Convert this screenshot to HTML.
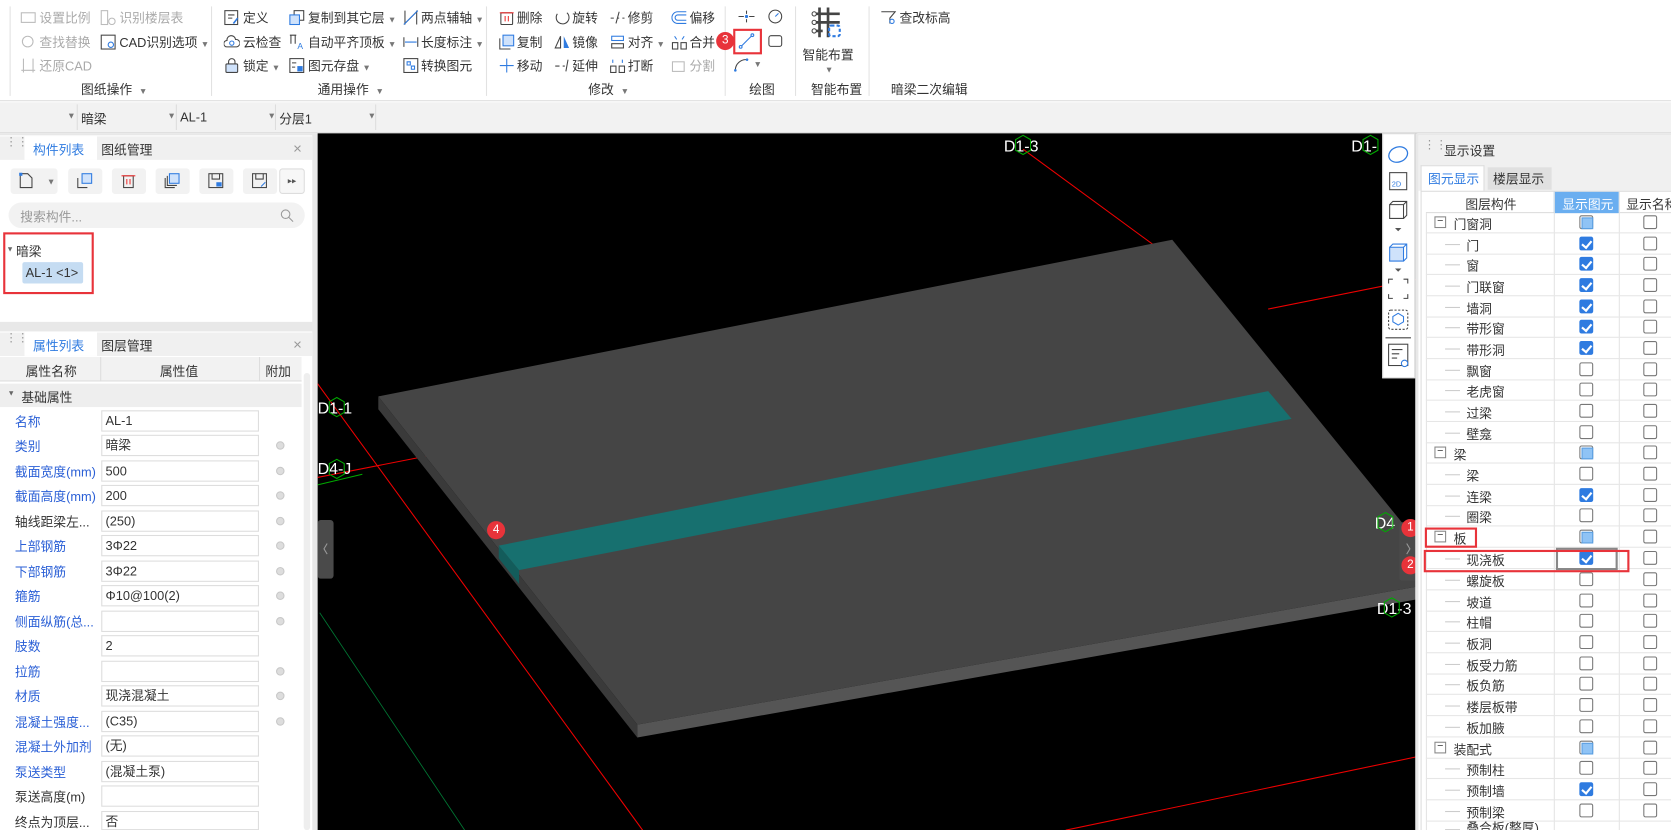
<!DOCTYPE html>
<html><head><meta charset="utf-8">
<style>
*{box-sizing:border-box;margin:0;padding:0}
html,body{width:1671px;height:830px;overflow:hidden;background:#fff}
#w{position:absolute;left:0;top:0;width:1568px;height:779px;overflow:hidden;transform:scale(1.06569);transform-origin:0 0;font-family:"Liberation Sans","Noto Sans CJK SC",sans-serif;font-size:12px;color:#333;background:#fff}
.a{position:absolute;white-space:nowrap}
.ic{position:absolute;width:15px;height:15px}
.gl{position:absolute;top:75px;font-size:12px;color:#333}
.sep{position:absolute;top:6px;width:1px;height:84px;background:#e2e2e2}
.dis{color:#aaa}
.dd{font-size:8px;color:#777;margin-left:3px}
.cb{position:absolute;width:13px;height:13px;border:1px solid #777;border-radius:2px;background:#fff}
.cb.c{background:#2f7be0;border-color:#2f7be0}
.cb.c:after{content:"";position:absolute;left:3px;top:1px;width:4px;height:7px;border:solid #fff;border-width:0 2px 2px 0;transform:rotate(40deg)}
.cb.g:after{content:"";position:absolute;left:1px;top:1px;width:9px;height:9px;background:#8fc3f5;border:1px solid #5a9ee0}
.badge{position:absolute;width:17px;height:17px;border-radius:50%;background:#e8333a;color:#fff;font-size:11px;text-align:center;line-height:17px}
.inp{position:absolute;left:95px;width:148px;height:20px;border:1px solid #ddd;background:#fff;padding-left:3px;line-height:18px}
.dot{position:absolute;left:259px;width:8px;height:8px;border-radius:50%;background:#ddd;border:1px solid #c8c8c8}
.lbl{position:absolute;left:14px}
.blue{color:#2a5fd6}
.rt{position:absolute;left:1338px;width:230px;height:20px;border-bottom:1px solid #e6e6e6;overflow:hidden}
</style></head><body><div id="w">

<!-- ribbon -->
<div class="a" style="left:0;top:0;width:1568px;height:95px;background:#fff;border-bottom:1px solid #ddd"></div>
<div class="sep" style="left:9px"></div>
<div class="sep" style="left:198px"></div>
<div class="sep" style="left:456px"></div>
<div class="sep" style="left:680px"></div>
<div class="sep" style="left:746px"></div>
<div class="sep" style="left:815px"></div>

<svg class="ic" style="left:19px;top:9px" viewBox="0 0 15 15"><rect x="1" y="3" width="13" height="9" fill="none" stroke="#bbb"/></svg>
<div class="a dis" style="left:37px;top:8px">设置比例</div>
<svg class="ic" style="left:94px;top:9px" viewBox="0 0 15 15"><rect x="1" y="1" width="6" height="13" fill="none" stroke="#bbb"/><circle cx="11" cy="11" r="3" fill="none" stroke="#bbb"/></svg>
<div class="a dis" style="left:112px;top:8px">识别楼层表</div>
<svg class="ic" style="left:19px;top:32px" viewBox="0 0 15 15"><circle cx="7" cy="7" r="5" fill="none" stroke="#bbb"/></svg>
<div class="a dis" style="left:37px;top:31px">查找替换</div>
<svg class="ic" style="left:94px;top:32px" viewBox="0 0 15 15"><rect x="1" y="1" width="13" height="13" fill="none" stroke="#444"/><circle cx="10" cy="10" r="2.5" fill="none" stroke="#2f7be0"/></svg>
<div class="a" style="left:112px;top:31px">CAD识别选项<span class="dd">▼</span></div>
<svg class="ic" style="left:19px;top:54px" viewBox="0 0 15 15"><path d="M3 1v13M1 12h13M12 1v13" fill="none" stroke="#bbb"/></svg>
<div class="a dis" style="left:37px;top:53px">还原CAD</div>
<div class="gl" style="left:76px">图纸操作 <span class="dd">▼</span></div>

<svg class="ic" style="left:210px;top:9px" viewBox="0 0 15 15"><rect x="1" y="1" width="12" height="13" fill="none" stroke="#444"/><path d="M4 5h6M4 8h4" stroke="#444"/><path d="M9 13l4-5" stroke="#2f7be0" stroke-width="1.5"/></svg>
<div class="a" style="left:228px;top:8px">定义</div>
<svg class="ic" style="left:210px;top:32px" viewBox="0 0 15 15"><path d="M3 12a3 3 0 010-6 4 4 0 018-1 3 3 0 011 7z" fill="none" stroke="#444"/><circle cx="7.5" cy="8.5" r="2" fill="none" stroke="#2f7be0"/></svg>
<div class="a" style="left:228px;top:31px">云检查</div>
<svg class="ic" style="left:210px;top:54px" viewBox="0 0 15 15"><rect x="2" y="6" width="11" height="8" rx="1" fill="#cfe2fb" stroke="#444"/><path d="M4.5 6V4a3 3 0 016 0v2" fill="none" stroke="#444"/></svg>
<div class="a" style="left:228px;top:53px">锁定<span class="dd">▼</span></div>
<svg class="ic" style="left:271px;top:9px" viewBox="0 0 15 15"><rect x="5" y="1" width="9" height="9" fill="none" stroke="#444"/><rect x="1" y="5" width="9" height="9" fill="#cfe2fb" stroke="#2f7be0"/></svg>
<div class="a" style="left:289px;top:8px">复制到其它层<span class="dd">▼</span></div>
<svg class="ic" style="left:271px;top:32px" viewBox="0 0 15 15"><path d="M2 1v8M6 1v8M1 1h6" fill="none" stroke="#444"/><text x="8" y="14" font-size="8" fill="#2f7be0">A</text></svg>
<div class="a" style="left:289px;top:31px">自动平齐顶板<span class="dd">▼</span></div>
<svg class="ic" style="left:271px;top:54px" viewBox="0 0 15 15"><rect x="1" y="1" width="13" height="13" fill="none" stroke="#444"/><path d="M3 5h4M3 9h3" stroke="#444"/><rect x="8" y="8" width="5" height="5" fill="#2f7be0"/></svg>
<div class="a" style="left:289px;top:53px">图元存盘<span class="dd">▼</span></div>
<svg class="ic" style="left:378px;top:9px" viewBox="0 0 15 15"><path d="M2 1v13M13 1v13M1 14L14 1" fill="none" stroke="#444"/><path d="M1 14L14 1" stroke="#2f7be0"/></svg>
<div class="a" style="left:395px;top:8px">两点辅轴<span class="dd">▼</span></div>
<svg class="ic" style="left:378px;top:32px" viewBox="0 0 15 15"><path d="M1 3v9M14 3v9" stroke="#444"/><path d="M2 7.5h11" stroke="#2f7be0"/></svg>
<div class="a" style="left:395px;top:31px">长度标注<span class="dd">▼</span></div>
<svg class="ic" style="left:378px;top:54px" viewBox="0 0 15 15"><rect x="1" y="1" width="13" height="13" fill="none" stroke="#444"/><path d="M4 4h3v3H4zM8 8h3v3H8z" fill="none" stroke="#2f7be0"/></svg>
<div class="a" style="left:395px;top:53px">转换图元</div>
<div class="gl" style="left:298px">通用操作 <span class="dd">▼</span></div>

<svg class="ic" style="left:468px;top:9px" viewBox="0 0 15 15"><rect x="2" y="3" width="11" height="11" rx="1" fill="none" stroke="#444"/><path d="M1 3h13M6 6v5M9 6v5" stroke="#e33"/></svg>
<div class="a" style="left:485px;top:8px">删除</div>
<svg class="ic" style="left:468px;top:32px" viewBox="0 0 15 15"><rect x="4" y="1" width="10" height="10" fill="#cfe2fb" stroke="#2f7be0"/><path d="M1 4v10h10" fill="none" stroke="#444"/></svg>
<div class="a" style="left:485px;top:31px">复制</div>
<svg class="ic" style="left:468px;top:54px" viewBox="0 0 15 15"><path d="M7.5 1v13M1 7.5h13" stroke="#2f7be0"/></svg>
<div class="a" style="left:485px;top:53px">移动</div>
<svg class="ic" style="left:520px;top:9px" viewBox="0 0 15 15"><path d="M3 4a6 6 0 109-1" fill="none" stroke="#444"/></svg>
<div class="a" style="left:537px;top:8px">旋转</div>
<svg class="ic" style="left:520px;top:32px" viewBox="0 0 15 15"><path d="M6 2L1 13h5z" fill="none" stroke="#444"/><path d="M9 2l5 11H9z" fill="#2f7be0"/></svg>
<div class="a" style="left:537px;top:31px">镜像</div>
<svg class="ic" style="left:520px;top:54px" viewBox="0 0 15 15"><path d="M1 8h4M8 8h2M13 2L11 13" stroke="#444"/></svg>
<div class="a" style="left:537px;top:53px">延伸</div>
<svg class="ic" style="left:572px;top:9px" viewBox="0 0 15 15"><path d="M1 8h3M7 8h2M12 8h2M9 2L6 13" stroke="#444"/></svg>
<div class="a" style="left:589px;top:8px">修剪</div>
<svg class="ic" style="left:572px;top:32px" viewBox="0 0 15 15"><rect x="2" y="2" width="11" height="4" fill="none" stroke="#2f7be0"/><rect x="2" y="9" width="11" height="4" fill="none" stroke="#444"/></svg>
<div class="a" style="left:589px;top:31px">对齐<span class="dd">▼</span></div>
<svg class="ic" style="left:572px;top:54px" viewBox="0 0 15 15"><rect x="1" y="8" width="5" height="6" fill="none" stroke="#444"/><rect x="9" y="8" width="5" height="6" fill="none" stroke="#444"/><path d="M3 5V2M12 5V2" stroke="#2f7be0"/></svg>
<div class="a" style="left:589px;top:53px">打断</div>
<svg class="ic" style="left:630px;top:9px" viewBox="0 0 15 15"><path d="M14 2H6a5 5 0 000 11h8M14 5H6a2.5 2.5 0 000 5h8" fill="none" stroke="#2f7be0"/></svg>
<div class="a" style="left:647px;top:8px">偏移</div>
<svg class="ic" style="left:630px;top:32px" viewBox="0 0 15 15"><rect x="1" y="8" width="5" height="6" fill="none" stroke="#444"/><rect x="9" y="8" width="5" height="6" fill="none" stroke="#444"/><path d="M3 2l2 3M12 2l-2 3" stroke="#2f7be0"/></svg>
<div class="a" style="left:647px;top:31px">合并</div>
<svg class="ic" style="left:630px;top:54px" viewBox="0 0 15 15"><rect x="1" y="4" width="11" height="9" fill="none" stroke="#bbb"/></svg>
<div class="a dis" style="left:647px;top:53px">分割</div>
<div class="gl" style="left:552px">修改 <span class="dd">▼</span></div>

<svg class="ic" style="left:693px;top:8px" viewBox="0 0 15 15"><path d="M0 7.5h5M10 7.5h5M7.5 2v3M7.5 10v3" stroke="#444"/><circle cx="7.5" cy="7.5" r="1.5" fill="#2f7be0"/></svg>
<svg class="ic" style="left:720px;top:8px" viewBox="0 0 15 15"><circle cx="7.5" cy="7.5" r="6" fill="none" stroke="#444"/><path d="M7.5 7.5l3-3" stroke="#2f7be0"/></svg>
<svg class="ic" style="left:693px;top:31px" viewBox="0 0 15 15"><path d="M2 13L13 2" stroke="#2f7be0"/><circle cx="2" cy="13" r="1.3" fill="#fff" stroke="#2f7be0"/><circle cx="13" cy="2" r="1.3" fill="#fff" stroke="#2f7be0"/></svg>
<div class="a" style="left:688px;top:27px;width:27px;height:24px;border:2px solid #e8333a"></div>
<svg class="ic" style="left:720px;top:31px" viewBox="0 0 15 15"><rect x="1.5" y="2.5" width="12" height="10" rx="2" fill="none" stroke="#444"/></svg>
<svg class="ic" style="left:688px;top:53px" viewBox="0 0 15 15"><path d="M2 13A10 10 0 0113 3" fill="none" stroke="#444"/><circle cx="2" cy="13" r="1.2" fill="#2f7be0"/><circle cx="13" cy="3" r="1.2" fill="#2f7be0"/></svg>
<div class="a dd" style="left:704px;top:56px">▼</div>
<div class="badge" style="left:672px;top:30px">3</div>
<div class="gl" style="left:703px">绘图</div>

<svg class="a" style="left:760px;top:6px" width="30" height="30" viewBox="0 0 30 30"><path d="M9 1v28M17 1v28M4 7h24M4 15h24M4 23h8" stroke="#444" stroke-width="2.5"/><circle cx="4" cy="7" r="2" fill="#fff" stroke="#444"/><circle cx="4" cy="15" r="2" fill="#fff" stroke="#444"/><circle cx="4" cy="23" r="2" fill="#fff" stroke="#444"/><rect x="18" y="18" width="10" height="10" rx="2" fill="none" stroke="#2f7be0" stroke-width="2" stroke-dasharray="3 2"/></svg>
<div class="a" style="left:753px;top:43px">智能布置</div>
<div class="a dd" style="left:771px;top:61px">▼</div>
<div class="gl" style="left:761px">智能布置</div>

<svg class="ic" style="left:826px;top:9px" viewBox="0 0 15 15"><path d="M1 2h13L9 8v5" fill="none" stroke="#444"/><circle cx="11" cy="11" r="2" fill="none" stroke="#2f7be0"/></svg>
<div class="a" style="left:844px;top:8px">查改标高</div>
<div class="gl" style="left:836px">暗梁二次编辑</div>

<!-- second toolbar -->
<div class="a" style="left:0;top:96px;width:1568px;height:29px;background:#f2f2f2;border-bottom:1px solid #ddd"></div>
<div class="a" style="left:72px;top:98px;width:1px;height:24px;background:#ddd"></div>
<div class="a" style="left:165px;top:98px;width:1px;height:24px;background:#ddd"></div>
<div class="a" style="left:258px;top:98px;width:1px;height:24px;background:#ddd"></div>
<div class="a" style="left:352px;top:98px;width:1px;height:24px;background:#ddd"></div>
<div class="a dd" style="left:60px;top:104px">▼</div>
<div class="a" style="left:76px;top:103px">暗梁</div><div class="a dd" style="left:154px;top:104px">▼</div>
<div class="a" style="left:169px;top:103px">AL-1</div><div class="a dd" style="left:248px;top:104px">▼</div>
<div class="a" style="left:262px;top:103px">分层1</div><div class="a dd" style="left:342px;top:104px">▼</div>

<!-- left panel -->
<div class="a" style="left:0;top:125px;width:298px;height:654px;background:#e8e8e8"></div>
<div class="a" style="left:0;top:127px;width:293px;height:175px;background:#fff"></div>
<div class="a" style="left:0;top:128px;width:293px;height:22px;background:#f0f0f0"></div>
<div class="a" style="left:5px;top:131px;color:#999;font-size:11px;line-height:5px">⋮⋮</div>
<div class="a" style="left:23px;top:128px;width:68px;height:22px;background:#fff"></div>
<div class="a" style="left:31px;top:132px;color:#2f7be0">构件列表</div>
<div class="a" style="left:95px;top:132px">图纸管理</div>
<div class="a" style="left:275px;top:131px;color:#999;font-size:14px">×</div>
<div class="a" style="left:10px;top:158px;width:44px;height:24px;background:#f2f2f2;border-radius:3px"></div>
<div class="a" style="left:64px;top:158px;width:32px;height:24px;background:#f2f2f2;border-radius:3px"></div>
<div class="a" style="left:105px;top:158px;width:32px;height:24px;background:#f2f2f2;border-radius:3px"></div>
<div class="a" style="left:146px;top:158px;width:32px;height:24px;background:#f2f2f2;border-radius:3px"></div>
<div class="a" style="left:187px;top:158px;width:32px;height:24px;background:#f2f2f2;border-radius:3px"></div>
<div class="a" style="left:228px;top:158px;width:32px;height:24px;background:#f2f2f2;border-radius:3px"></div>
<div class="a" style="left:262px;top:158px;width:24px;height:24px;background:#f7f7f7;border:1px solid #ddd;border-radius:3px;font-size:8px;text-align:center;line-height:22px;color:#555">▸▸</div>
<svg class="ic" style="left:17px;top:162px" viewBox="0 0 15 15"><path d="M2 1h7l4 4v9H2z" fill="none" stroke="#444"/><rect x="1" y="0" width="3" height="3" fill="#2f7be0"/></svg>
<div class="a dd" style="left:41px;top:166px">▼</div>
<svg class="ic" style="left:72px;top:162px" viewBox="0 0 15 15"><rect x="5" y="1" width="9" height="9" fill="#cfe2fb" stroke="#2f7be0"/><path d="M1 5v9h9" fill="none" stroke="#444"/></svg>
<svg class="ic" style="left:113px;top:162px" viewBox="0 0 15 15"><rect x="3" y="3" width="9" height="11" fill="none" stroke="#444"/><path d="M1 3h13M6 6v5M9 6v5" stroke="#e33"/></svg>
<svg class="ic" style="left:154px;top:162px" viewBox="0 0 15 15"><rect x="5" y="1" width="9" height="9" fill="#cfe2fb" stroke="#2f7be0"/><path d="M3 3v9h9M1 5v9h9" fill="none" stroke="#444"/></svg>
<svg class="ic" style="left:195px;top:162px" viewBox="0 0 15 15"><rect x="1" y="1" width="13" height="13" fill="none" stroke="#444"/><path d="M4 1v5h7V1" fill="none" stroke="#444"/><rect x="8" y="9" width="5" height="4" fill="#2f7be0"/></svg>
<svg class="ic" style="left:236px;top:162px" viewBox="0 0 15 15"><rect x="1" y="1" width="13" height="13" fill="none" stroke="#444"/><path d="M4 1v5h7V1" fill="none" stroke="#444"/><path d="M9 13l4-4" stroke="#2f7be0"/></svg>
<div class="a" style="left:8px;top:190px;width:278px;height:24px;background:#f2f2f2;border-radius:12px"></div>
<div class="a" style="left:19px;top:195px;color:#999">搜索构件...</div>
<svg class="ic" style="left:262px;top:195px" viewBox="0 0 15 15"><circle cx="6" cy="6" r="4" fill="none" stroke="#999"/><path d="M9 9l4 4" stroke="#999"/></svg>
<div class="a" style="left:3px;top:218px;width:85px;height:58px;border:2px solid #e8333a"></div>
<div class="a" style="left:6px;top:231px;font-size:7px;color:#666">▼</div>
<div class="a" style="left:15px;top:227px">暗梁</div>
<div class="a" style="left:21px;top:246px;width:57px;height:20px;background:#c5dcf2;border-radius:2px;padding-left:3px;line-height:20px">AL-1 &lt;1&gt;</div>

<div class="a" style="left:0;top:311px;width:293px;height:468px;background:#fff"></div>
<div class="a" style="left:0;top:312px;width:293px;height:22px;background:#f0f0f0"></div>
<div class="a" style="left:5px;top:315px;color:#999;font-size:11px;line-height:5px">⋮⋮</div>
<div class="a" style="left:23px;top:312px;width:68px;height:22px;background:#fff"></div>
<div class="a" style="left:31px;top:316px;color:#2f7be0">属性列表</div>
<div class="a" style="left:95px;top:316px">图层管理</div>
<div class="a" style="left:275px;top:315px;color:#999;font-size:14px">×</div>
<div class="a" style="left:0;top:335px;width:283px;height:23px;background:#f2f2f2;border-bottom:1px solid #ddd"></div>
<div class="a" style="left:94px;top:335px;width:1px;height:23px;background:#ddd"></div>
<div class="a" style="left:243px;top:335px;width:1px;height:23px;background:#ddd"></div>
<div class="a" style="left:24px;top:340px">属性名称</div>
<div class="a" style="left:150px;top:340px">属性值</div>
<div class="a" style="left:249px;top:340px">附加</div>
<div class="a" style="left:0;top:360px;width:283px;height:22px;background:#eee"></div>
<div class="a" style="left:7px;top:366px;font-size:7px;color:#666">▼</div>
<div class="a" style="left:20px;top:364px">基础属性</div>
<div class="a" style="left:285px;top:350px;width:6px;height:429px;background:#eee;border-radius:3px"></div>

<div class="lbl blue" style="top:387px">名称</div><div class="inp" style="top:385px">AL-1</div>
<div class="lbl blue" style="top:410px">类别</div><div class="inp" style="top:408px">暗梁</div><div class="dot" style="top:414px"></div>
<div class="lbl blue" style="top:434px">截面宽度(mm)</div><div class="inp" style="top:432px">500</div><div class="dot" style="top:438px"></div>
<div class="lbl blue" style="top:457px">截面高度(mm)</div><div class="inp" style="top:455px">200</div><div class="dot" style="top:461px"></div>
<div class="lbl" style="top:481px">轴线距梁左...</div><div class="inp" style="top:479px">(250)</div><div class="dot" style="top:485px"></div>
<div class="lbl blue" style="top:504px">上部钢筋</div><div class="inp" style="top:502px">3Φ22</div><div class="dot" style="top:508px"></div>
<div class="lbl blue" style="top:528px">下部钢筋</div><div class="inp" style="top:526px">3Φ22</div><div class="dot" style="top:532px"></div>
<div class="lbl blue" style="top:551px">箍筋</div><div class="inp" style="top:549px">Φ10@100(2)</div><div class="dot" style="top:555px"></div>
<div class="lbl blue" style="top:575px">侧面纵筋(总...</div><div class="inp" style="top:573px"></div><div class="dot" style="top:579px"></div>
<div class="lbl blue" style="top:598px">肢数</div><div class="inp" style="top:596px">2</div>
<div class="lbl blue" style="top:622px">拉筋</div><div class="inp" style="top:620px"></div><div class="dot" style="top:626px"></div>
<div class="lbl blue" style="top:645px">材质</div><div class="inp" style="top:643px">现浇混凝土</div><div class="dot" style="top:649px"></div>
<div class="lbl blue" style="top:669px">混凝土强度...</div><div class="inp" style="top:667px">(C35)</div><div class="dot" style="top:673px"></div>
<div class="lbl blue" style="top:692px">混凝土外加剂</div><div class="inp" style="top:690px">(无)</div>
<div class="lbl blue" style="top:716px">泵送类型</div><div class="inp" style="top:714px">(混凝土泵)</div>
<div class="lbl" style="top:739px">泵送高度(m)</div><div class="inp" style="top:737px"></div>
<div class="lbl" style="top:763px">终点为顶层...</div><div class="inp" style="top:761px;height:18px">否</div>

<!-- viewport -->
<svg class="a" style="left:298px;top:125px" width="1032" height="654" viewBox="298 125 1032 654">
<rect x="298" y="125" width="1032" height="654" fill="#000"/>
<path d="M298 360L603 779" stroke="#e00" stroke-width="1"/>
<path d="M960 140L1110 250" stroke="#e00"/>
<path d="M298 448L400 428" stroke="#e00"/>
<path d="M1190 290L1330 262" stroke="#e00"/>
<path d="M1000 779L1330 710" stroke="#e00"/>
<path d="M298 455L340 445" stroke="#0a0"/>
<path d="M300 575L436 779" stroke="#073" stroke-width="0.8"/>
<polygon points="355,372 1100,225 1360,545 598,680" fill="#454545"/>
<polygon points="355,372 598,680 598,692 355,384" fill="#3a3a3a"/>
<polygon points="598,680 1360,545 1360,557 598,692" fill="#555"/>
<polygon points="468,512 1190,367 1212,393 487,535" fill="#17706f"/>
<polygon points="468,512 487,535 487,548 468,524" fill="#135c5b"/>
<g font-family="Liberation Sans,sans-serif" font-size="15" fill="#fff">
<text x="942" y="142">D1-3</text>
<text x="1268" y="142">D1-</text>
<text x="298" y="388">D1-1</text>
<text x="298" y="445">D4-J</text>
<text x="1290" y="496">D4</text>
<text x="1292" y="576">D1-3</text>
</g>
<g fill="none" stroke="#0a0" stroke-width="1">
<polygon points="960,127 967,131 967,141 960,145 953,141 953,131"/>
<polygon points="1286,127 1293,131 1293,141 1286,145 1279,141 1279,131"/>
<polygon points="316,373 323,377 323,387 316,391 309,387 309,377"/>
<polygon points="316,431 323,435 323,445 316,449 309,445 309,435"/>
<polygon points="1300,481 1307,485 1307,495 1300,499 1293,495 1293,485"/>
<polygon points="1306,561 1313,565 1313,575 1306,579 1299,575 1299,565"/>
</g>
<rect x="298" y="488" width="15" height="55" rx="3" fill="#4a4a4a"/>
<path d="M307 510l-3 5 3 5" stroke="#999" fill="none"/>
<rect x="1313" y="490" width="17" height="55" rx="3" fill="#4a4a4a"/>
<path d="M1320 510l3 5-3 5" stroke="#999" fill="none"/>
</svg>
<div class="badge" style="left:457px;top:489px">4</div>
<div class="badge" style="left:1315px;top:487px">1</div>
<div class="badge" style="left:1315px;top:522px">2</div>

<!-- right vertical toolbar -->
<div class="a" style="left:1297px;top:125px;width:31px;height:230px;background:#fff;border:1px solid #ddd"></div>
<svg class="a" style="left:1300px;top:133px" width="24" height="215" viewBox="0 0 24 215">
<ellipse cx="12" cy="12" rx="9" ry="7" fill="none" stroke="#2f7be0" stroke-width="1.2" transform="rotate(-20 12 12)"/>
<rect x="4" y="29" width="16" height="16" fill="none" stroke="#444"/><text x="6" y="42" font-size="7" fill="#2f7be0" font-family="Liberation Sans">2D</text>
<path d="M4 59h13v13H4zM4 59l3-3h13v13l-3 3M17 59l3-3" fill="none" stroke="#444"/>
<path d="M9 81l3 3 3-3z" fill="#555"/>
<path d="M4 99h13v13H4z" fill="#cfe2fb" stroke="#2f7be0"/><path d="M4 99l3-3h13v13l-3 3M17 99l3-3" fill="none" stroke="#2f7be0"/>
<path d="M9 119l3 3 3-3z" fill="#555"/>
<path d="M3 133v-4h4M17 129h4v4M21 143v4h-4M7 147H3v-4" fill="none" stroke="#444"/>
<rect x="3" y="158" width="18" height="18" rx="2" fill="none" stroke="#444" stroke-dasharray="2 1.5"/><path d="M12 161l5 3v5l-5 3-5-3v-5z" fill="none" stroke="#2f7be0"/>
<path d="M0 184h24" stroke="#444"/>
<rect x="3" y="190" width="18" height="20" fill="none" stroke="#444"/><path d="M6 195h10M6 199h7M6 203h5" stroke="#444"/><circle cx="18" cy="208" r="3" fill="#fff" stroke="#2f7be0"/>
</svg>

<!-- right panel -->
<div class="a" style="left:1328px;top:125px;width:240px;height:654px;background:#e8e8e8"></div>
<div class="a" style="left:1331px;top:127px;width:237px;height:652px;background:#fff"></div>
<div class="a" style="left:1331px;top:127px;width:237px;height:26px;background:#f0f0f0"></div>
<div class="a" style="left:1336px;top:134px;color:#999;font-size:11px;line-height:5px">⋮⋮</div>
<div class="a" style="left:1355px;top:133px">显示设置</div>
<div class="a" style="left:1331px;top:153px;width:237px;height:26px;background:#f0f0f0"></div>
<div class="a" style="left:1333px;top:155px;width:60px;height:24px;background:#fff;border:1px solid #ddd;border-bottom:none"></div>
<div class="a" style="left:1340px;top:159px;color:#2f7be0">图元显示</div>
<div class="a" style="left:1396px;top:157px;width:60px;height:21px;background:#e0e0e0"></div>
<div class="a" style="left:1401px;top:159px">楼层显示</div>
<div class="a" style="left:1333px;top:179px;width:235px;height:600px;border-left:1px solid #ddd;border-top:1px solid #ddd"></div>
<div class="a" style="left:1338px;top:180px;width:230px;height:20px;border-bottom:1px solid #ddd"></div>
<div class="a" style="left:1458px;top:180px;width:61px;height:20px;background:#6aaef0"></div>
<div class="a" style="left:1375px;top:183px">图层构件</div>
<div class="a" style="left:1466px;top:183px;color:#fff">显示图元</div>
<div class="a" style="left:1526px;top:183px">显示名称</div>
<div class="a" style="left:1458px;top:180px;width:1px;height:599px;background:#e4e4e4"></div>
<div class="a" style="left:1519px;top:180px;width:1px;height:599px;background:#e4e4e4"></div>
<div class="a" style="left:1338px;top:200px;width:1px;height:579px;background:#e4e4e4"></div>

<div class="rt" style="top:199px"><div class="a" style="left:8px;top:4px;width:11px;height:11px;border:1px solid #888;font-size:10px;line-height:8px;text-align:center">−</div><div class="a" style="left:26px;top:3px">门窗洞</div><div class="cb g" style="left:144px;top:3px"></div><div class="cb" style="left:204px;top:3px"></div></div>
<div class="rt" style="top:219px"><div class="a" style="left:18px;top:10px;width:14px;height:1px;background:#ccc"></div><div class="a" style="left:38px;top:3px">门</div><div class="cb c" style="left:144px;top:3px"></div><div class="cb" style="left:204px;top:3px"></div></div>
<div class="rt" style="top:238px"><div class="a" style="left:18px;top:10px;width:14px;height:1px;background:#ccc"></div><div class="a" style="left:38px;top:3px">窗</div><div class="cb c" style="left:144px;top:3px"></div><div class="cb" style="left:204px;top:3px"></div></div>
<div class="rt" style="top:258px"><div class="a" style="left:18px;top:10px;width:14px;height:1px;background:#ccc"></div><div class="a" style="left:38px;top:3px">门联窗</div><div class="cb c" style="left:144px;top:3px"></div><div class="cb" style="left:204px;top:3px"></div></div>
<div class="rt" style="top:278px"><div class="a" style="left:18px;top:10px;width:14px;height:1px;background:#ccc"></div><div class="a" style="left:38px;top:3px">墙洞</div><div class="cb c" style="left:144px;top:3px"></div><div class="cb" style="left:204px;top:3px"></div></div>
<div class="rt" style="top:297px"><div class="a" style="left:18px;top:10px;width:14px;height:1px;background:#ccc"></div><div class="a" style="left:38px;top:3px">带形窗</div><div class="cb c" style="left:144px;top:3px"></div><div class="cb" style="left:204px;top:3px"></div></div>
<div class="rt" style="top:317px"><div class="a" style="left:18px;top:10px;width:14px;height:1px;background:#ccc"></div><div class="a" style="left:38px;top:3px">带形洞</div><div class="cb c" style="left:144px;top:3px"></div><div class="cb" style="left:204px;top:3px"></div></div>
<div class="rt" style="top:337px"><div class="a" style="left:18px;top:10px;width:14px;height:1px;background:#ccc"></div><div class="a" style="left:38px;top:3px">飘窗</div><div class="cb" style="left:144px;top:3px"></div><div class="cb" style="left:204px;top:3px"></div></div>
<div class="rt" style="top:356px"><div class="a" style="left:18px;top:10px;width:14px;height:1px;background:#ccc"></div><div class="a" style="left:38px;top:3px">老虎窗</div><div class="cb" style="left:144px;top:3px"></div><div class="cb" style="left:204px;top:3px"></div></div>
<div class="rt" style="top:376px"><div class="a" style="left:18px;top:10px;width:14px;height:1px;background:#ccc"></div><div class="a" style="left:38px;top:3px">过梁</div><div class="cb" style="left:144px;top:3px"></div><div class="cb" style="left:204px;top:3px"></div></div>
<div class="rt" style="top:396px"><div class="a" style="left:18px;top:10px;width:14px;height:1px;background:#ccc"></div><div class="a" style="left:38px;top:3px">壁龛</div><div class="cb" style="left:144px;top:3px"></div><div class="cb" style="left:204px;top:3px"></div></div>
<div class="rt" style="top:415px"><div class="a" style="left:8px;top:4px;width:11px;height:11px;border:1px solid #888;font-size:10px;line-height:8px;text-align:center">−</div><div class="a" style="left:26px;top:3px">梁</div><div class="cb g" style="left:144px;top:3px"></div><div class="cb" style="left:204px;top:3px"></div></div>
<div class="rt" style="top:435px"><div class="a" style="left:18px;top:10px;width:14px;height:1px;background:#ccc"></div><div class="a" style="left:38px;top:3px">梁</div><div class="cb" style="left:144px;top:3px"></div><div class="cb" style="left:204px;top:3px"></div></div>
<div class="rt" style="top:455px"><div class="a" style="left:18px;top:10px;width:14px;height:1px;background:#ccc"></div><div class="a" style="left:38px;top:3px">连梁</div><div class="cb c" style="left:144px;top:3px"></div><div class="cb" style="left:204px;top:3px"></div></div>
<div class="rt" style="top:474px"><div class="a" style="left:18px;top:10px;width:14px;height:1px;background:#ccc"></div><div class="a" style="left:38px;top:3px">圈梁</div><div class="cb" style="left:144px;top:3px"></div><div class="cb" style="left:204px;top:3px"></div></div>
<div class="rt" style="top:494px"><div class="a" style="left:8px;top:4px;width:11px;height:11px;border:1px solid #888;font-size:10px;line-height:8px;text-align:center">−</div><div class="a" style="left:26px;top:3px">板</div><div class="cb g" style="left:144px;top:3px"></div><div class="cb" style="left:204px;top:3px"></div></div>
<div class="rt" style="top:514px"><div class="a" style="left:18px;top:10px;width:14px;height:1px;background:#ccc"></div><div class="a" style="left:38px;top:3px">现浇板</div><div class="cb c" style="left:144px;top:3px"></div><div class="cb" style="left:204px;top:3px"></div></div>
<div class="rt" style="top:534px"><div class="a" style="left:18px;top:10px;width:14px;height:1px;background:#ccc"></div><div class="a" style="left:38px;top:3px">螺旋板</div><div class="cb" style="left:144px;top:3px"></div><div class="cb" style="left:204px;top:3px"></div></div>
<div class="rt" style="top:554px"><div class="a" style="left:18px;top:10px;width:14px;height:1px;background:#ccc"></div><div class="a" style="left:38px;top:3px">坡道</div><div class="cb" style="left:144px;top:3px"></div><div class="cb" style="left:204px;top:3px"></div></div>
<div class="rt" style="top:573px"><div class="a" style="left:18px;top:10px;width:14px;height:1px;background:#ccc"></div><div class="a" style="left:38px;top:3px">柱帽</div><div class="cb" style="left:144px;top:3px"></div><div class="cb" style="left:204px;top:3px"></div></div>
<div class="rt" style="top:593px"><div class="a" style="left:18px;top:10px;width:14px;height:1px;background:#ccc"></div><div class="a" style="left:38px;top:3px">板洞</div><div class="cb" style="left:144px;top:3px"></div><div class="cb" style="left:204px;top:3px"></div></div>
<div class="rt" style="top:613px"><div class="a" style="left:18px;top:10px;width:14px;height:1px;background:#ccc"></div><div class="a" style="left:38px;top:3px">板受力筋</div><div class="cb" style="left:144px;top:3px"></div><div class="cb" style="left:204px;top:3px"></div></div>
<div class="rt" style="top:632px"><div class="a" style="left:18px;top:10px;width:14px;height:1px;background:#ccc"></div><div class="a" style="left:38px;top:3px">板负筋</div><div class="cb" style="left:144px;top:3px"></div><div class="cb" style="left:204px;top:3px"></div></div>
<div class="rt" style="top:652px"><div class="a" style="left:18px;top:10px;width:14px;height:1px;background:#ccc"></div><div class="a" style="left:38px;top:3px">楼层板带</div><div class="cb" style="left:144px;top:3px"></div><div class="cb" style="left:204px;top:3px"></div></div>
<div class="rt" style="top:672px"><div class="a" style="left:18px;top:10px;width:14px;height:1px;background:#ccc"></div><div class="a" style="left:38px;top:3px">板加腋</div><div class="cb" style="left:144px;top:3px"></div><div class="cb" style="left:204px;top:3px"></div></div>
<div class="rt" style="top:692px"><div class="a" style="left:8px;top:4px;width:11px;height:11px;border:1px solid #888;font-size:10px;line-height:8px;text-align:center">−</div><div class="a" style="left:26px;top:3px">装配式</div><div class="cb g" style="left:144px;top:3px"></div><div class="cb" style="left:204px;top:3px"></div></div>
<div class="rt" style="top:711px"><div class="a" style="left:18px;top:10px;width:14px;height:1px;background:#ccc"></div><div class="a" style="left:38px;top:3px">预制柱</div><div class="cb" style="left:144px;top:3px"></div><div class="cb" style="left:204px;top:3px"></div></div>
<div class="rt" style="top:731px"><div class="a" style="left:18px;top:10px;width:14px;height:1px;background:#ccc"></div><div class="a" style="left:38px;top:3px">预制墙</div><div class="cb c" style="left:144px;top:3px"></div><div class="cb" style="left:204px;top:3px"></div></div>
<div class="rt" style="top:751px"><div class="a" style="left:18px;top:10px;width:14px;height:1px;background:#ccc"></div><div class="a" style="left:38px;top:3px">预制梁</div><div class="cb" style="left:144px;top:3px"></div><div class="cb" style="left:204px;top:3px"></div></div>
<div class="rt" style="top:770px;height:9px;border-bottom:none"><div class="a" style="left:18px;top:8px;width:14px;height:1px;background:#ccc"></div><div class="a" style="left:38px;top:1px;line-height:12px">叠合板(整厚)</div></div>

<div class="a" style="left:1337px;top:495px;width:49px;height:19px;border:2px solid #e8333a"></div>
<div class="a" style="left:1460px;top:514px;width:58px;height:21px;border:2px solid #888"></div>
<div class="a" style="left:1336px;top:516px;width:193px;height:21px;border:2px solid #e8333a"></div>
</div></body></html>
